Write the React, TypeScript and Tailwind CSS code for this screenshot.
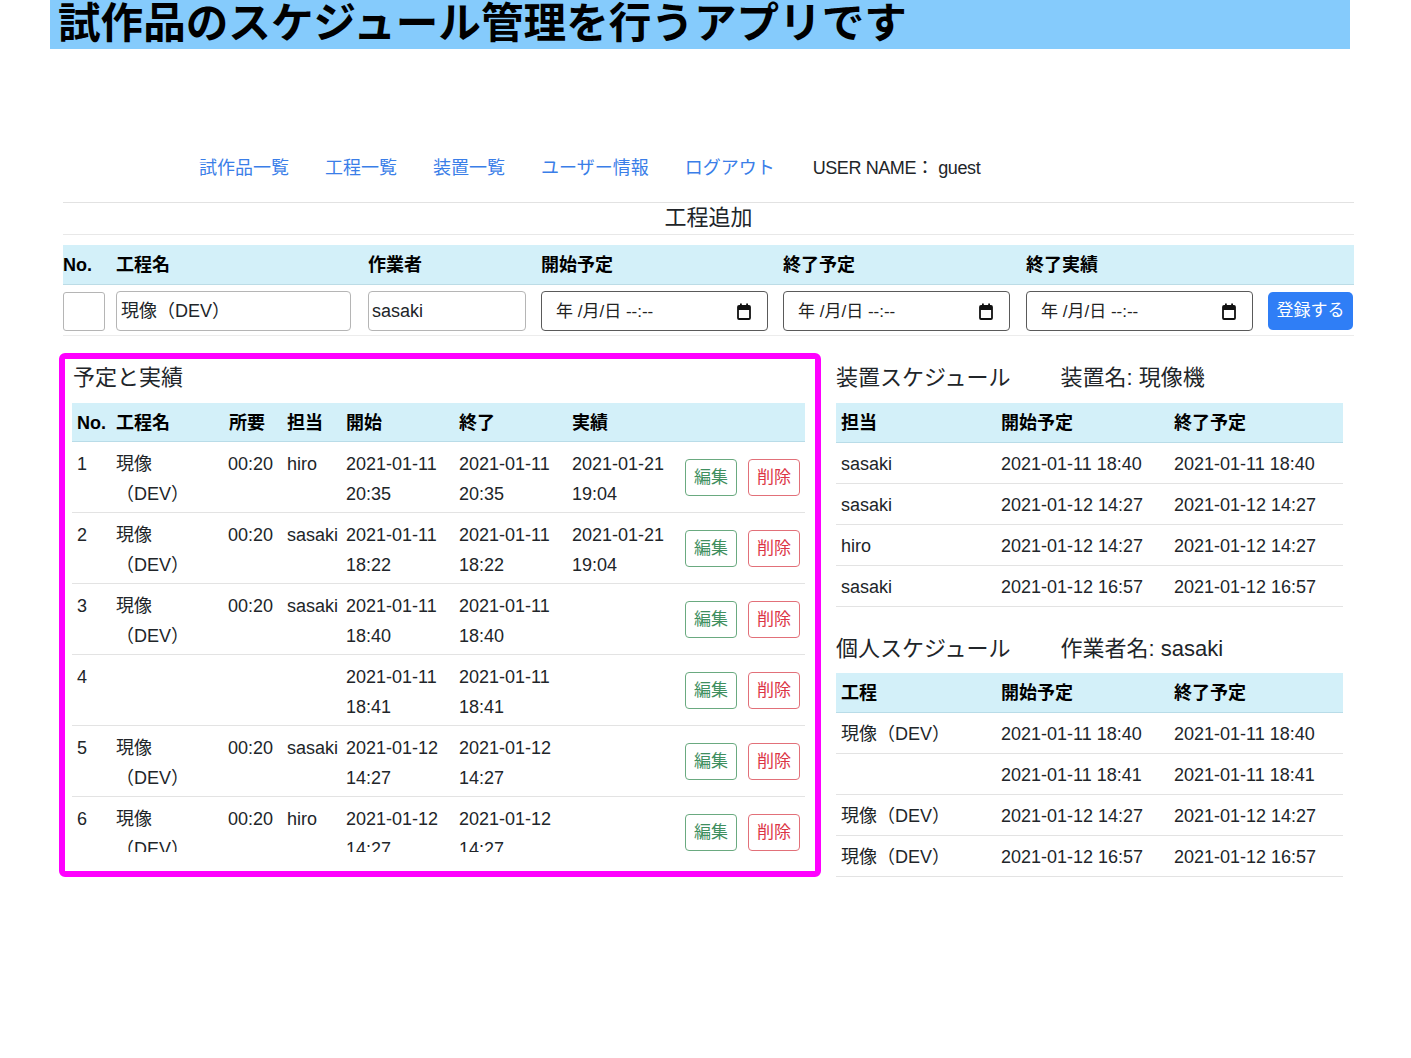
import React from "react";

const FONT = "font-['Liberation_Sans','Noto_Sans_CJK_JP',sans-serif]";

function CalendarIcon() {
  return (
    <svg width="14" height="17" viewBox="0 0 14 17" className="shrink-0">
      <rect x="1" y="3" width="12" height="13" rx="1" fill="none" stroke="#111" strokeWidth="1.8" />
      <rect x="1" y="3" width="12" height="4" fill="#111" />
      <rect x="3" y="0.5" width="1.8" height="3" fill="#111" />
      <rect x="9.2" y="0.5" width="1.8" height="3" fill="#111" />
    </svg>
  );
}

function DateInput() {
  return (
    <div className="flex h-[40px] w-[227px] items-center justify-between rounded-[4px] border-[1.5px] border-[#5a5a5a] pl-[14px] pr-[16px] pt-[1px] text-[17px] text-[#222]">
      <span>年 /月/日 --:--</span>
      <CalendarIcon />
    </div>
  );
}

const planRows = [
  { no: "1", name: true, dur: "00:20", who: "hiro", s: ["2021-01-11", "20:35"], e: ["2021-01-11", "20:35"], a: ["2021-01-21", "19:04"] },
  { no: "2", name: true, dur: "00:20", who: "sasaki", s: ["2021-01-11", "18:22"], e: ["2021-01-11", "18:22"], a: ["2021-01-21", "19:04"] },
  { no: "3", name: true, dur: "00:20", who: "sasaki", s: ["2021-01-11", "18:40"], e: ["2021-01-11", "18:40"], a: null },
  { no: "4", name: false, dur: "", who: "", s: ["2021-01-11", "18:41"], e: ["2021-01-11", "18:41"], a: null },
  { no: "5", name: true, dur: "00:20", who: "sasaki", s: ["2021-01-12", "14:27"], e: ["2021-01-12", "14:27"], a: null },
  { no: "6", name: true, dur: "00:20", who: "hiro", s: ["2021-01-12", "14:27"], e: ["2021-01-12", "14:27"], a: null },
];

const LEFT_COLS = "grid grid-cols-[40px_113px_58px_59px_113px_113px_112px_125px]";
const RIGHT_COLS = "grid grid-cols-[160px_173px_174px]";

function Two({ v }: { v: string[] | null }) {
  if (!v) return <div />;
  return (
    <div className="pl-[4px] leading-[30px]">
      {v[0]}
      <br />
      {v[1]}
    </div>
  );
}

function PlanTable() {
  return (
    <div className="w-[733px] text-[18px] text-[#212529]">
      <div className={`${LEFT_COLS} h-[39px] items-center border-b border-[#b9dce8] bg-[#d3f0f9] pt-[2px] font-bold text-black`}>
        <div className="pl-[5px]">No.</div>
        <div className="pl-[4px]">工程名</div>
        <div className="pl-[4px]">所要</div>
        <div className="pl-[4px]">担当</div>
        <div className="pl-[4px]">開始</div>
        <div className="pl-[4px]">終了</div>
        <div className="pl-[4px]">実績</div>
        <div />
      </div>
      {planRows.map((r) => (
        <div key={r.no} className={`${LEFT_COLS} h-[71px] items-center border-b border-[#e3e3e3]`}>
          <div className="self-start pl-[5px] pt-[7px] leading-[30px]">{r.no}</div>
          <div className="self-start pl-[4px] pt-[7px] leading-[30px]">
            {r.name ? (
              <>
                現像
                <br />
                （DEV）
              </>
            ) : null}
          </div>
          <div className="self-start pl-[3px] pt-[7px] leading-[30px]">{r.dur}</div>
          <div className="self-start pl-[4px] pt-[7px] leading-[30px]">{r.who}</div>
          <div className="self-start pt-[7px]">
            <Two v={r.s} />
          </div>
          <div className="self-start pt-[7px]">
            <Two v={r.e} />
          </div>
          <div className="self-start pt-[7px]">
            <Two v={r.a} />
          </div>
          <div className="flex items-center gap-[11px] pl-[5px] pt-[1px]">
            <button className="h-[37px] w-[52px] rounded-[4px] border border-[#6aaa80] pt-[1px] text-[17px] text-[#3f8f5f]">編集</button>
            <button className="h-[37px] w-[52px] rounded-[4px] border border-[#e27079] pt-[1px] text-[17px] text-[#dc3545]">削除</button>
          </div>
        </div>
      ))}
    </div>
  );
}

function SmallTable({ head, rows }: { head: string[]; rows: string[][] }) {
  return (
    <div className="w-[507px] text-[18px] text-[#212529]">
      <div className={`${RIGHT_COLS} h-[40px] items-center border-b border-[#b9dce8] bg-[#d3f0f9] pt-[2px] font-bold text-black`}>
        {head.map((h) => (
          <div key={h} className="pl-[5px]">
            {h}
          </div>
        ))}
      </div>
      {rows.map((r, i) => (
        <div key={i} className={`${RIGHT_COLS} h-[41px] items-center border-b border-[#e3e3e3] pt-[3px]`}>
          {r.map((c, j) => (
            <div key={j} className="pl-[5px]">
              {c}
            </div>
          ))}
        </div>
      ))}
    </div>
  );
}

export default function App() {
  return (
    <div className={`${FONT} min-h-[1058px] w-[1411px] bg-white text-[#212529]`}>
      <div className="ml-[50px] h-[49px] w-[1300px] overflow-hidden bg-[#85cbfc]">
        <div className="pl-[8px] text-[42.6px] font-bold leading-[46px] text-black">試作品のスケジュール管理を行うアプリです</div>
      </div>

      <div className="ml-[63px] w-[1291px]">
        <div className="mt-[106px] flex h-[27px] items-center gap-[36px] pl-[136px] text-[18px] leading-[27px]">
          <a className="text-[#3a7ee8]">試作品一覧</a>
          <a className="text-[#3a7ee8]">工程一覧</a>
          <a className="text-[#3a7ee8]">装置一覧</a>
          <a className="text-[#3a7ee8]">ユーザー情報</a>
          <a className="text-[#3a7ee8]">ログアウト</a>
          <span className="ml-[2px] tracking-[-0.4px] text-[#212529]">USER NAME： guest</span>
        </div>

        <div className="mt-[20px] border-t border-[#e2e2e2]" />
        <div className="flex h-[31px] items-center justify-center pb-[2px] text-[22px]">工程追加</div>
        <div className="border-t border-[#e8e8e8]" />

        <div className="mt-[10px]">
          <div className="grid h-[40px] grid-cols-[53px_252px_173px_242px_243px_242px_86px] items-center border-b border-[#bcdce6] bg-[#d3f0f9] pt-[2px] text-[18px] font-bold text-black">
            <div>No.</div>
            <div>工程名</div>
            <div>作業者</div>
            <div>開始予定</div>
            <div>終了予定</div>
            <div>終了実績</div>
            <div />
          </div>
          <div className="grid h-[51px] grid-cols-[53px_252px_173px_242px_243px_242px_86px] items-center border-b border-[#ececec] pt-[2px] text-[18px]">
            <div className="h-[39px] w-[42px] rounded-[3px] border border-[#b5b5b5]" />
            <div className="flex h-[40px] w-[235px] items-center rounded-[4px] border border-[#b5b5b5] pl-[4px] pt-[1px]">現像（DEV）</div>
            <div className="flex h-[40px] w-[158px] items-center rounded-[4px] border border-[#b5b5b5] pl-[3px] pt-[1px]">sasaki</div>
            <DateInput />
            <DateInput />
            <DateInput />
            <button className="h-[38px] w-[85px] rounded-[5px] bg-[#2f7ef6] text-[17px] text-white">登録する</button>
          </div>
        </div>
      </div>

      <div className="mt-[17px] ml-[59px] flex items-start gap-[15px]">
        <div className="w-[762px] rounded-[6px] border-[6px] border-[#ff00ff] px-[7px] pb-[19px]">
          <div className="h-[493px] overflow-hidden">
            <div className="pl-[1px] pt-[6px] text-[22px] leading-[26px]">予定と実績</div>
            <div className="mt-[12px]">
              <PlanTable />
            </div>
          </div>
        </div>

        <div className="w-[507px] pt-[12px]">
          <div className="flex text-[22px] leading-[26px]">
            <span>装置スケジュール</span>
            <span className="ml-[50px]">装置名: 現像機</span>
          </div>
          <div className="mt-[12px]">
            <SmallTable
              head={["担当", "開始予定", "終了予定"]}
              rows={[
                ["sasaki", "2021-01-11 18:40", "2021-01-11 18:40"],
                ["sasaki", "2021-01-12 14:27", "2021-01-12 14:27"],
                ["hiro", "2021-01-12 14:27", "2021-01-12 14:27"],
                ["sasaki", "2021-01-12 16:57", "2021-01-12 16:57"],
              ]}
            />
          </div>
          <div className="mt-[29px] flex text-[22px] leading-[26px]">
            <span>個人スケジュール</span>
            <span className="ml-[50px]">作業者名: sasaki</span>
          </div>
          <div className="mt-[11px]">
            <SmallTable
              head={["工程", "開始予定", "終了予定"]}
              rows={[
                ["現像（DEV）", "2021-01-11 18:40", "2021-01-11 18:40"],
                ["", "2021-01-11 18:41", "2021-01-11 18:41"],
                ["現像（DEV）", "2021-01-12 14:27", "2021-01-12 14:27"],
                ["現像（DEV）", "2021-01-12 16:57", "2021-01-12 16:57"],
              ]}
            />
          </div>
        </div>
      </div>
    </div>
  );
}
